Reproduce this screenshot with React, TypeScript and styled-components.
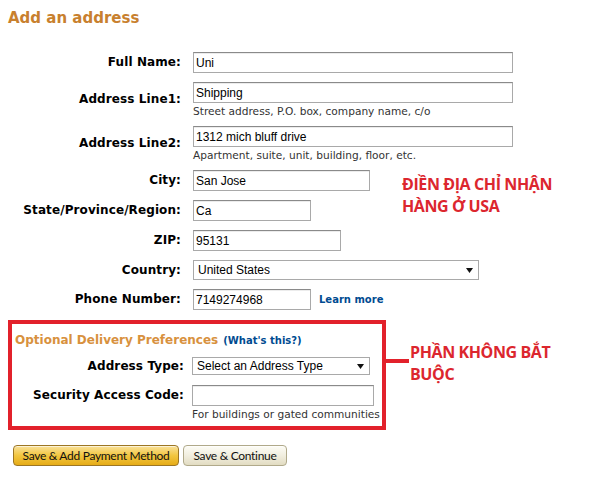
import React from "react";
import styled, { createGlobalStyle } from "styled-components";

const GlobalStyle = createGlobalStyle`
  html, body { margin: 0; padding: 0; background: #fff; }
  body { font-family: "DejaVu Sans", Verdana, sans-serif; color: #000; }
`;

const Page = styled.div`
  width: 600px;
  height: 496px;
  box-sizing: border-box;
  padding: 8px 8px 0;
  overflow: hidden;
`;

const Title = styled.h1`
  margin: 0;
  font-family: "DejaVu Sans", Verdana, sans-serif;
  font-size: 15px;
  line-height: 20px;
  font-weight: bold;
  color: #c8802e;
`;

const Form = styled.div`
  margin-top: 24px;
  display: flex;
  flex-direction: column;
  gap: 9px;
`;

const Row = styled.div`
  position: relative;
  display: grid;
  grid-template-columns: 173px 1fr;
  column-gap: 12px;
  align-items: center;
`;

const Label = styled.label`
  text-align: right;
  font-weight: bold;
  font-size: 12px;
  line-height: 15px;
  letter-spacing: 0.1px;
  white-space: nowrap;
`;

const FieldCol = styled.div<{ $inline?: boolean }>`
  display: flex;
  flex-direction: ${(p) => (p.$inline ? "row" : "column")};
  align-items: ${(p) => (p.$inline ? "center" : "flex-start")};
  gap: ${(p) => (p.$inline ? "8px" : "0")};
`;

const TextInput = styled.input<{ $w: number }>`
  box-sizing: border-box;
  width: ${(p) => p.$w}px;
  height: 21px;
  margin: 0;
  padding: 0 2px;
  border: 1px solid #a9a9a9;
  border-top-color: #8a8a8a;
  box-shadow: inset 0 1px 0 #ececec;
  background: #fff;
  color: #000;
  font-family: "Liberation Sans", Arial, sans-serif;
  font-size: 12px;
  outline: none;
`;

const SelectBox = styled.div<{ $w: number; $h: number }>`
  box-sizing: border-box;
  width: ${(p) => p.$w}px;
  height: ${(p) => p.$h}px;
  display: flex;
  align-items: center;
  justify-content: space-between;
  padding: 0 5px 0 4px;
  border: 1px solid #a9a9a9;
  background: #fff;
  font-family: "Liberation Sans", Arial, sans-serif;
  font-size: 12px;
  color: #000;
`;

const Hint = styled.div`
  margin-top: 2px;
  font-size: 10.6px;
  line-height: 12px;
  color: #333;
  white-space: nowrap;
`;

const LinkText = styled.a`
  font-size: 10px;
  font-weight: bold;
  color: #004b91;
  text-decoration: none;
  white-space: nowrap;
`;

const HeadingLink = styled(LinkText)`
  margin-left: 5px;
`;

const Callout = styled.div`
  font-family: "Open Sans", "Noto Sans", sans-serif;
  font-weight: bold;
  font-size: 16px;
  line-height: 22px;
  letter-spacing: -0.4px;
  color: #dc262e;
  white-space: nowrap;
`;

const FloatingCallout = styled(Callout)`
  position: absolute;
  left: 394px;
  top: 3px;
`;

const OptionalArea = styled.div`
  margin-top: 10px;
  display: flex;
  align-items: flex-start;
`;

const RedBox = styled.div`
  box-sizing: border-box;
  width: 378px;
  height: 110px;
  border: 4px solid #e2212b;
  padding: 8px 0 6px 0;
  display: flex;
  flex-direction: column;
`;

const BoxHeading = styled.div`
  height: 16px;
  padding-left: 3px;
  font-size: 12px;
  line-height: 16px;
  font-weight: bold;
  color: #d8913e;
  white-space: nowrap;
`;

const BoxRow = styled.div<{ $top: number }>`
  margin-top: ${(p) => p.$top}px;
  display: grid;
  grid-template-columns: 172px 1fr;
  column-gap: 8px;
  align-items: start;
`;

const BoxLabel = styled(Label)<{ $h: number }>`
  line-height: ${(p) => p.$h}px;
`;

const Connector = styled.div`
  margin-top: 39px;
  width: 23px;
  height: 3.5px;
  background: #e2212b;
`;

const SideCallout = styled(Callout)`
  margin-top: 21px;
  margin-left: 1px;
`;

const Buttons = styled.div`
  margin-top: 15px;
  padding-left: 5px;
  display: flex;
  gap: 4px;
`;

const Button = styled.button<{ $primary?: boolean }>`
  box-sizing: border-box;
  height: 21px;
  width: ${(p) => (p.$primary ? "166px" : "104px")};
  margin: 0;
  padding: 0;
  border-radius: 4px;
  border: 1px solid ${(p) => (p.$primary ? "#9c7624" : "#b0a98a")};
  background: ${(p) =>
    p.$primary
      ? "linear-gradient(#f9e19a, #f2c640 50%, #e6ac17)"
      : "linear-gradient(#fdfcf6, #f1eedf 50%, #e2dcc2)"};
  box-shadow: inset 0 1px 0 rgba(255, 255, 255, 0.6);
  font-family: Lato, "Open Sans", sans-serif;
  font-size: 12px;
  letter-spacing: -0.3px;
  color: #111;
  cursor: pointer;
`;

const Arrow = () => (
  <svg width="7" height="5" viewBox="0 0 7 5">
    <path d="M0 0h7L3.5 5z" fill="#111" />
  </svg>
);

export default function App() {
  return (
    <Page>
      <GlobalStyle />
      <Title>Add an address</Title>
      <Form>
        <Row>
          <Label>Full Name:</Label>
          <FieldCol>
            <TextInput $w={320} defaultValue="Uni" />
          </FieldCol>
        </Row>
        <Row>
          <Label>Address Line1:</Label>
          <FieldCol>
            <TextInput $w={320} defaultValue="Shipping" />
            <Hint>Street address, P.O. box, company name, c/o</Hint>
          </FieldCol>
        </Row>
        <Row>
          <Label>Address Line2:</Label>
          <FieldCol>
            <TextInput $w={320} defaultValue="1312 mich bluff drive" />
            <Hint>Apartment, suite, unit, building, floor, etc.</Hint>
          </FieldCol>
        </Row>
        <Row>
          <Label>City:</Label>
          <FieldCol>
            <TextInput $w={177} defaultValue="San Jose" />
          </FieldCol>
          <FloatingCallout>
            ĐIỀN ĐỊA CHỈ NHẬN
            <br />
            HÀNG Ở USA
          </FloatingCallout>
        </Row>
        <Row>
          <Label>State/Province/Region:</Label>
          <FieldCol>
            <TextInput $w={118} defaultValue="Ca" />
          </FieldCol>
        </Row>
        <Row>
          <Label>ZIP:</Label>
          <FieldCol>
            <TextInput $w={148} defaultValue="95131" />
          </FieldCol>
        </Row>
        <Row>
          <Label>Country:</Label>
          <FieldCol>
            <SelectBox $w={286} $h={20}>
              <span>United States</span>
              <Arrow />
            </SelectBox>
          </FieldCol>
        </Row>
        <Row>
          <Label>Phone Number:</Label>
          <FieldCol $inline>
            <TextInput $w={118} defaultValue="7149274968" />
            <LinkText>Learn more</LinkText>
          </FieldCol>
        </Row>
      </Form>

      <OptionalArea>
        <RedBox>
          <BoxHeading>
            Optional Delivery Preferences
            <HeadingLink>(What's this?)</HeadingLink>
          </BoxHeading>
          <BoxRow $top={9}>
            <BoxLabel $h={18}>Address Type:</BoxLabel>
            <SelectBox $w={178} $h={18}>
              <span>Select an Address Type</span>
              <Arrow />
            </SelectBox>
          </BoxRow>
          <BoxRow $top={10}>
            <BoxLabel $h={21}>Security Access Code:</BoxLabel>
            <FieldCol>
              <TextInput $w={182} />
              <Hint>For buildings or gated communities</Hint>
            </FieldCol>
          </BoxRow>
        </RedBox>
        <Connector />
        <SideCallout>
          PHẦN KHÔNG BẮT
          <br />
          BUỘC
        </SideCallout>
      </OptionalArea>

      <Buttons>
        <Button $primary>Save &amp; Add Payment Method</Button>
        <Button>Save &amp; Continue</Button>
      </Buttons>
    </Page>
  );
}
